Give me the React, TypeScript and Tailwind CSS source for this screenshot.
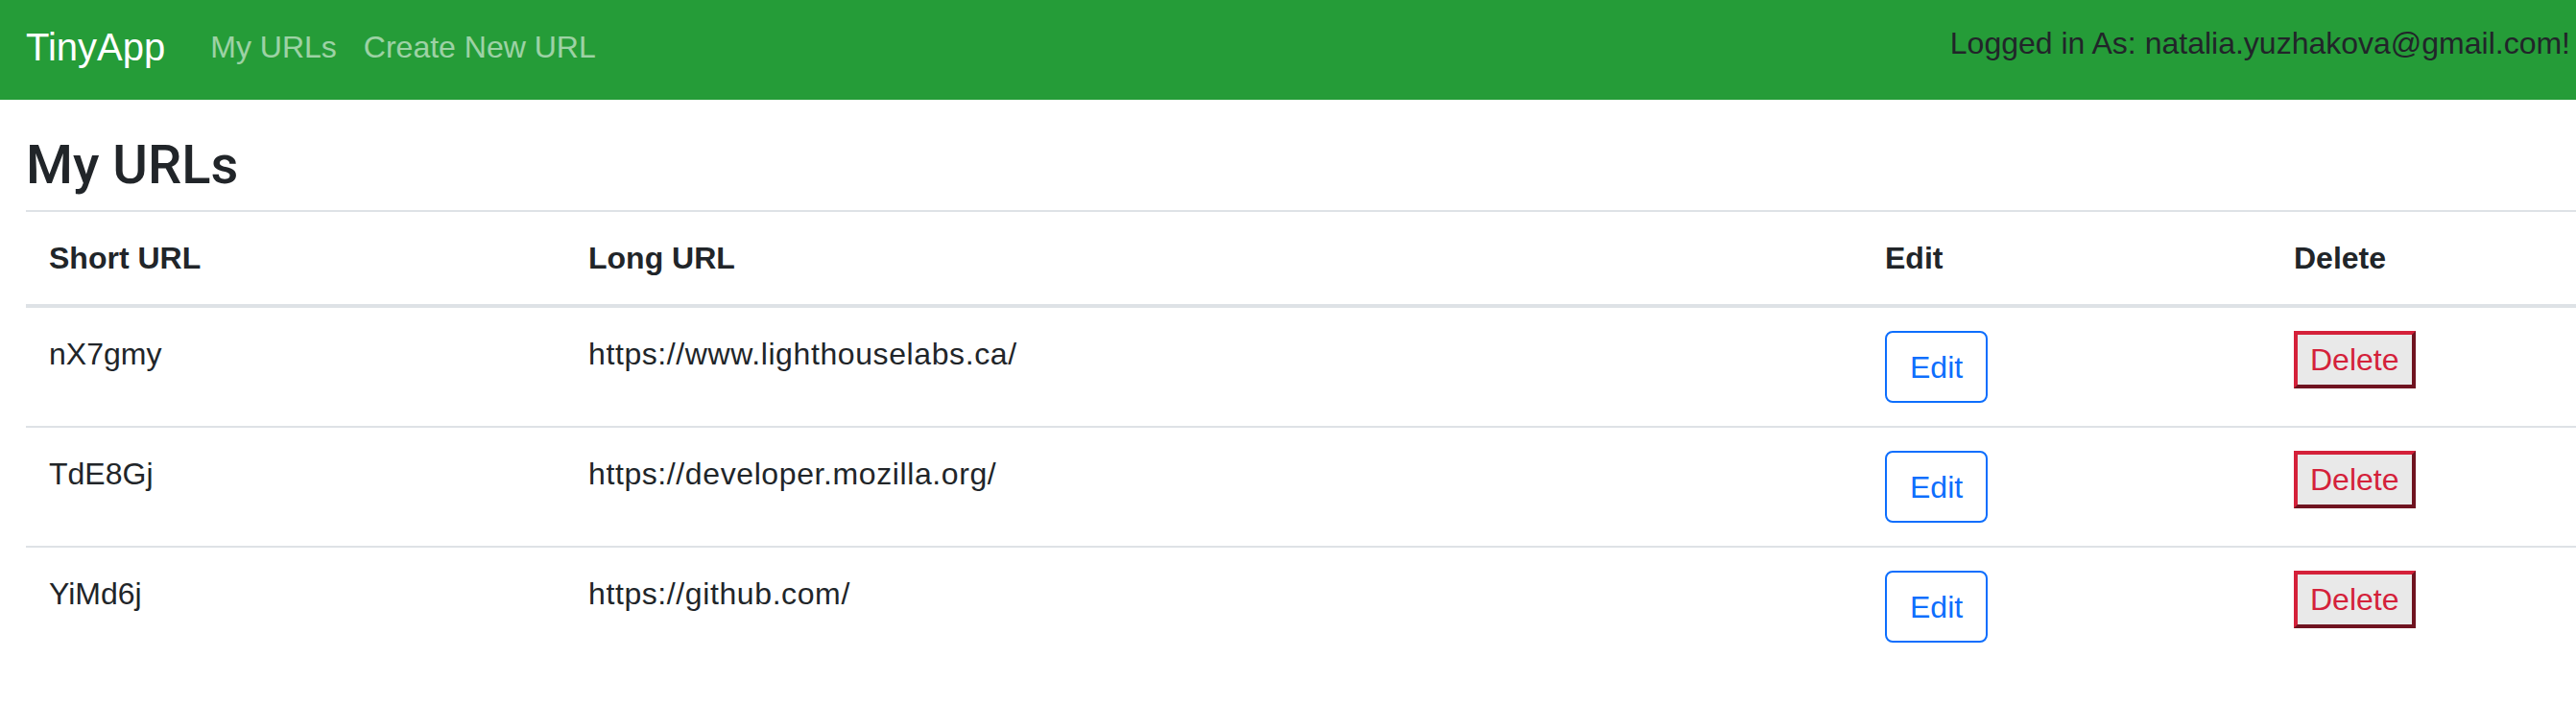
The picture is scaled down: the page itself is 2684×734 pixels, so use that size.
import React from "react";

interface UrlRow {
  short: string;
  long: string;
}

const urls: UrlRow[] = [
  { short: "nX7gmy", long: "https://www.lighthouselabs.ca/" },
  { short: "TdE8Gj", long: "https://developer.mozilla.org/" },
  { short: "YiMd6j", long: "https://github.com/" },
];

function Navbar() {
  return (
    <nav className="flex h-[104px] items-center bg-[#259c38] pb-[6px]">
      <a className="ml-[27px] text-[40px] leading-none text-white">TinyApp</a>
      <div className="ml-[47px] flex gap-[28px] text-[32px] leading-none text-white/55">
        <a>My URLs</a>
        <a>Create New URL</a>
      </div>
      <div className="ml-auto mb-[8px] pr-[6px] text-[32px] leading-none text-[#212529]">
        Logged in As: natalia.yuzhakova@gmail.com!
      </div>
    </nav>
  );
}

function UrlTable() {
  return (
    <table className="ml-[27px] w-[2657px] border-collapse text-left text-[32px] leading-[48px] text-[#212529]">
      <thead>
        <tr>
          <th className="w-[562px] border-t-2 border-b-4 border-[#dee2e6] px-[24px] py-[24px] align-top font-bold">
            Short URL
          </th>
          <th className="w-[1351px] border-t-2 border-b-4 border-[#dee2e6] px-[24px] py-[24px] align-top font-bold">
            Long URL
          </th>
          <th className="w-[426px] border-t-2 border-b-4 border-[#dee2e6] px-[24px] py-[24px] align-top font-bold">
            Edit
          </th>
          <th className="border-t-2 border-b-4 border-[#dee2e6] px-[24px] py-[24px] align-top font-bold">
            Delete
          </th>
        </tr>
      </thead>
      <tbody>
        {urls.map((url, i) => (
          <tr key={url.short}>
            <td className={`px-[24px] py-[24px] align-top ${i > 0 ? "border-t-2 border-[#dee2e6]" : ""}`}>
              {url.short}
            </td>
            <td className={`px-[24px] py-[24px] align-top tracking-[0.6px] ${i > 0 ? "border-t-2 border-[#dee2e6]" : ""}`}>
              {url.long}
            </td>
            <td className={`px-[24px] py-[24px] align-top ${i > 0 ? "border-t-2 border-[#dee2e6]" : ""}`}>
              <button className="flex h-[75px] items-center rounded-[8px] border-2 border-[#0d6efd] px-[24px] text-[32px] leading-none text-[#0d6efd]">
                Edit
              </button>
            </td>
            <td className={`px-[24px] py-[24px] align-top ${i > 0 ? "border-t-2 border-[#dee2e6]" : ""}`}>
              <button className="flex h-[60px] items-center border-4 border-t-[#d4213a] border-l-[#d4213a] border-b-[#6f1320] border-r-[#6f1320] bg-[#e9e9e9] px-[13px] text-[32px] leading-none text-[#d4213a]">
                Delete
              </button>
            </td>
          </tr>
        ))}
      </tbody>
    </table>
  );
}

export default function App() {
  return (
    <div className="min-h-[734px] overflow-hidden bg-white font-['Liberation_Sans',Arial,sans-serif]">
      <Navbar />
      <h1 className="ml-[27px] mt-[40px] mb-[19px] font-['Roboto',sans-serif] text-[56px] font-medium leading-none text-[#212529]">
        My URLs
      </h1>
      <UrlTable />
    </div>
  );
}
